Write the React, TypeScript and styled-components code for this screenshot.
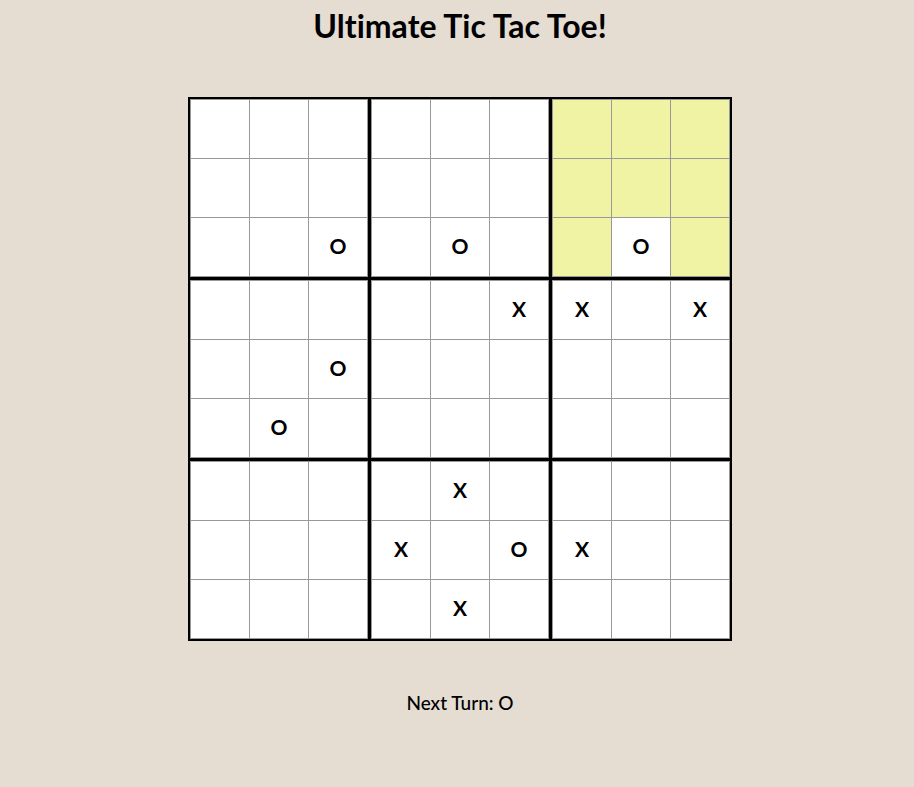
import React from "react";
import styled, { createGlobalStyle } from "styled-components";

const GlobalStyle = createGlobalStyle`
  html, body {
    margin: 0;
    padding: 0;
    background: #e5dcd2;
  }
  body {
    font-family: Lato, "Open Sans", sans-serif;
    font-variant-ligatures: none;
    color: #000;
  }
`;

const Page = styled.div`
  display: flex;
  flex-direction: column;
  align-items: center;
  min-height: 787px;
  padding-left: 6px;
  box-sizing: border-box;
`;

const Title = styled.h1`
  font-family: Lato, sans-serif;
  font-weight: 700;
  font-size: 32px;
  margin: 6px 0 0;
  line-height: 40px;
  font-variant-ligatures: none;
`;

const Board = styled.div`
  margin-top: 51px;
  display: grid;
  grid-template-columns: repeat(3, 178px);
  grid-template-rows: repeat(3, 178px);
  gap: 3px;
  background: #000;
  border: 2px solid #000;
`;

const SubBoard = styled.div`
  display: grid;
  grid-template-columns: repeat(3, 58px);
  grid-template-rows: repeat(3, 58px);
  gap: 1px;
  padding: 1px;
  background: #999;
`;

const Cell = styled.div<{ $active: boolean }>`
  background: ${(p) => (p.$active ? "#f0f3a4" : "#fff")};
  display: flex;
  align-items: center;
  justify-content: center;
  padding-bottom: 3px;
  box-sizing: border-box;
  font-family: Lato, sans-serif;
  font-weight: 700;
  font-size: 21px;
`;

const Status = styled.div`
  margin-top: 50px;
  font-family: Lato, sans-serif;
  font-size: 19px;
  font-weight: 500;
`;

const rows = [
  ".........",
  ".........",
  "..O.O..O.",
  ".....XX.X",
  "..O......",
  ".O.......",
  "....X....",
  "...X.OX..",
  "....X....",
];

const activeBoard = 2;

export default function App() {
  const boards = Array.from({ length: 9 }, (_, b) => {
    const br = Math.floor(b / 3);
    const bc = b % 3;
    return Array.from({ length: 9 }, (_, c) => {
      const r = br * 3 + Math.floor(c / 3);
      const col = bc * 3 + (c % 3);
      const v = rows[r][col];
      return v === "." ? "" : v;
    });
  });

  return (
    <Page>
      <GlobalStyle />
      <Title>Ultimate Tic Tac Toe!</Title>
      <Board>
        {boards.map((cells, b) => (
          <SubBoard key={b}>
            {cells.map((v, i) => (
              <Cell key={i} $active={b === activeBoard && v === ""}>
                {v}
              </Cell>
            ))}
          </SubBoard>
        ))}
      </Board>
      <Status>Next Turn: O</Status>
    </Page>
  );
}
